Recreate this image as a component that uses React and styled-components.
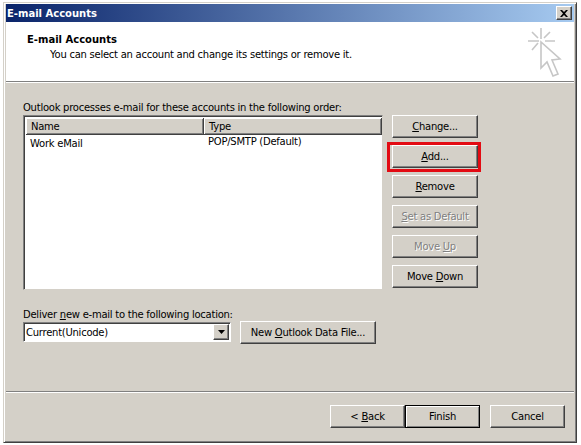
import React from 'react';
import styled, { createGlobalStyle } from 'styled-components';

const Global = createGlobalStyle`
  html, body { margin: 0; padding: 0; background: #fff; }
  #root { width: 581px; height: 445px; overflow: hidden; }
  * { box-sizing: border-box; }
`

const Page = styled.div`
  width: 581px;
  height: 445px;
  padding: 2px 0 0 3px;
  font-family: 'DejaVu Sans', Tahoma, sans-serif;
  font-size: 10px;
  letter-spacing: -0.25px;
  color: #000;
`

const Win = styled.div`
  width: 574px;
  height: 441px;
  background: #d4d0c8;
  border: 1px solid;
  border-color: #d4d0c8 #404040 #404040 #d4d0c8;
  box-shadow: inset 1px 1px 0 #fff, inset -1px -1px 0 #808080;
  padding: 1px 2px 2px;
  display: flex;
  flex-direction: column;
`

const TitleBar = styled.div`
  height: 18px;
  flex: none;
  background: linear-gradient(to right, #0a246a, #a6caf0);
  color: #fff;
  font-weight: bold;
  letter-spacing: 0;
  display: flex;
  align-items: center;
  justify-content: space-between;
  padding: 0 2px 0 1px;
`

const CloseBtn = styled.div`
  width: 16px;
  height: 14px;
  background: #d4d0c8;
  border: 1px solid;
  border-color: #fff #404040 #404040 #fff;
  box-shadow: inset -1px -1px 0 #808080;
  display: flex;
  align-items: center;
  justify-content: center;
`

const Header = styled.div`
  height: 60px;
  flex: none;
  background: #fff;
  border-bottom: 1px solid #808080;
  display: flex;
  justify-content: space-between;
  padding: 4px 12px 0 21px;
`

const HeaderText = styled.div`
  padding-top: 7px;
`

const HeaderTitle = styled.div`
  font-weight: bold;
  letter-spacing: 0;
  line-height: 13px;
`

const HeaderSub = styled.div`
  line-height: 13px;
  padding: 2px 0 0 23px;
`

const Rule = styled.div`
  height: 1px;
  background: #fff;
  flex: none;
`

const Body = styled.div`
  flex: 1;
  display: flex;
  flex-direction: column;
  padding: 18px 0 0 17px;
`

const Label = styled.div`
  line-height: 13px;
  height: 13px;
`

const Columns = styled.div`
  display: flex;
  margin-top: 1px;
`

const ListBox = styled.div`
  width: 360px;
  height: 175px;
  background: #fff;
  border: 1px solid;
  border-color: #808080 #d4d0c8 #d4d0c8 #808080;
  box-shadow: inset 1px 1px 0 #404040;
  padding: 2px 0 0 2px;
`

const ListHead = styled.div`
  display: grid;
  grid-template-columns: 178px 1fr;
  height: 16px;
  background: #d4d0c8;
`

const HeadCell = styled.div`
  border-right: 1px solid #404040;
  border-bottom: 1px solid #404040;
  box-shadow: inset 1px 1px 0 #fff, inset -1px -1px 0 #808080;
  padding: 1px 0 0 5px;
  line-height: 15px;
`

const ListRow = styled.div`
  display: grid;
  grid-template-columns: 178px 1fr;
  padding-top: 1px;
`

const Cell = styled.div`
  padding-left: 4px;
  line-height: 13px;
  padding-top: ${p => p.$drop || 0}px;
`

const ButtonCol = styled.div`
  display: flex;
  flex-direction: column;
  gap: 7px;
  margin-left: 9px;
`

const Btn = styled.div`
  width: ${p => p.$w || 86}px;
  height: 23px;
  flex: none;
  background: #d4d0c8;
  border: 1px solid;
  border-color: ${p => (p.$default ? '#000' : '#fff #404040 #404040 #fff')};
  box-shadow: ${p => (p.$default
    ? 'inset 1px 1px 0 #fff, inset -1px -1px 0 #808080'
    : 'inset -1px -1px 0 #808080')};
  display: flex;
  align-items: center;
  justify-content: center;
  white-space: pre;
  position: relative;
  color: ${p => (p.$disabled ? '#808080' : '#000')};
  text-shadow: ${p => (p.$disabled ? '1px 1px 0 #fff' : 'none')};
`

const Marker = styled.div`
  position: absolute;
  top: -4px;
  right: -4px;
  bottom: -5px;
  left: -6px;
  border: 3px solid #e30b13;
  pointer-events: none;
`

const Key = styled.u`
  text-decoration-thickness: 1px;
  text-underline-offset: 1px;
`

const DeliverBlock = styled.div`
  margin-top: 18px;
`

const DeliverRow = styled.div`
  display: flex;
  align-items: flex-start;
`

const Combo = styled.div`
  width: 208px;
  height: 20px;
  margin-top: 1px;
  background: #fff;
  border: 1px solid;
  border-color: #808080 #fff #fff #808080;
  box-shadow: inset 1px 1px 0 #404040;
  display: flex;
  align-items: center;
  justify-content: space-between;
  padding: 1px 1px 1px 2px;
  margin-right: 9px;
`

const ComboArrow = styled.div`
  width: 16px;
  height: 16px;
  background: #d4d0c8;
  border: 1px solid;
  border-color: #fff #404040 #404040 #fff;
  box-shadow: inset -1px -1px 0 #808080;
  display: flex;
  align-items: center;
  justify-content: center;
`

const FooterRule = styled.div`
  height: 2px;
  flex: none;
  background: #808080;
  border-bottom: 1px solid #fff;
`

const Footer = styled.div`
  height: 47px;
  flex: none;
  display: flex;
  justify-content: flex-end;
  padding: 12px 9px 0 0;
`

const BackFinish = styled.div`
  display: flex;
  margin-right: 10px;
`

const App = () => (
  <Page>
    <Global />
    <Win>
      <TitleBar>
        E-mail Accounts
        <CloseBtn>
          <svg width="8" height="7" viewBox="0 0 8 7">
            <path d="M0 0h2l2 2 2-2h2L5 3.5 8 7H6L4 5 2 7H0l3-3.5z" fill="#000" />
          </svg>
        </CloseBtn>
      </TitleBar>
      <Header>
        <HeaderText>
          <HeaderTitle>E-mail Accounts</HeaderTitle>
          <HeaderSub>You can select an account and change its settings or remove it.</HeaderSub>
        </HeaderText>
        <svg width="36" height="52" viewBox="526 26 36 52" fill="none" stroke="#c6c6c6" strokeWidth="1.6">
          <path d="M541 28v11M528 41h11M545 41h10M532 32l6 6M550 32l-6 6M532 50l6-7" />
          <path d="M541 42v26l6-6 6 14 5-2-6-14 8-1z" fill="#fff" />
        </svg>
      </Header>
      <Rule />
      <Body>
        <Label>Outlook processes e-mail for these accounts in the following order:</Label>
        <Columns>
          <ListBox>
            <ListHead>
              <HeadCell>Name</HeadCell>
              <HeadCell>Type</HeadCell>
            </ListHead>
            <ListRow>
              <Cell $drop={2}>Work eMail</Cell>
              <Cell>POP/SMTP (Default)</Cell>
            </ListRow>
          </ListBox>
          <ButtonCol>
            <Btn><span><Key>C</Key>hange...</span></Btn>
            <Btn><span><Key>A</Key>dd...</span><Marker /></Btn>
            <Btn><span><Key>R</Key>emove</span></Btn>
            <Btn $disabled><span><Key>S</Key>et as Default</span></Btn>
            <Btn $disabled><span>Move <Key>U</Key>p</span></Btn>
            <Btn><span>Move <Key>D</Key>own</span></Btn>
          </ButtonCol>
        </Columns>
        <DeliverBlock>
          <Label>Deliver <Key>n</Key>ew e-mail to the following location:</Label>
          <DeliverRow>
            <Combo>
              Current(Unicode)
              <ComboArrow>
                <svg width="7" height="4" viewBox="0 0 7 4"><path d="M0 0h7L3.5 4z" fill="#000" /></svg>
              </ComboArrow>
            </Combo>
            <Btn $w={136}><span>New <Key>O</Key>utlook Data File...</span></Btn>
          </DeliverRow>
        </DeliverBlock>
      </Body>
      <FooterRule />
      <Footer>
        <BackFinish>
          <Btn $w={75}><span>&lt; <Key>B</Key>ack</span></Btn>
          <Btn $w={75} $default><span>Finish</span></Btn>
        </BackFinish>
        <Btn $w={75}><span>Cancel</span></Btn>
      </Footer>
    </Win>
  </Page>
)

export default App;
